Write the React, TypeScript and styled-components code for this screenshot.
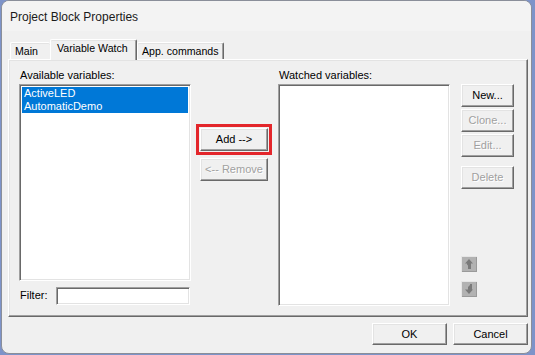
import React from "react";
import styled, { createGlobalStyle } from "styled-components";

const Global = createGlobalStyle`
  html, body {
    margin: 0;
    padding: 0;
    width: 535px;
    height: 355px;
    overflow: hidden;
    background: #7d93c9;
    font-family: "Liberation Sans", Arial, sans-serif;
    font-size: 11px;
    color: #000;
  }
  * { box-sizing: border-box; }
`;

const Desktop = styled.div`
  padding-left: 1px;
  width: 535px;
  height: 355px;
`;

const Window = styled.div`
  width: 531px;
  height: 354px;
  border: 1px solid #8a8e99;
  border-radius: 8px;
  overflow: hidden;
  background: #f0f0f0;
  display: flex;
  flex-direction: column;
`;

const TitleBar = styled.div`
  height: 30px;
  flex: none;
  background: #f3f3f3;
  display: flex;
  align-items: center;
  padding: 1px 0 0 8px;
  font-size: 12px;
  color: #1a1a1a;
`;

const Body = styled.div`
  padding: 8px 3px 0 6px;
  display: flex;
  flex-direction: column;
`;

const TabRow = styled.div`
  display: flex;
  align-items: flex-end;
  height: 20px;
  padding-left: 2px;
  position: relative;
  z-index: 1;
`;

const Tab = styled.div<{ $active?: boolean; $w: number; $noRight?: boolean }>`
  width: ${(p) => p.$w}px;
  height: ${(p) => (p.$active ? 21 : 17)}px;
  margin-bottom: ${(p) => (p.$active ? -1 : 0)}px;
  padding: ${(p) => (p.$active ? "2px 0 0 6px" : "2px 0 0 4px")};
  line-height: 13px;
  font-size: 10.6px;
  background: #f0f0f0;
  border-top: 1px solid #ffffff;
  border-left: 1px solid #ffffff;
  border-right: ${(p) => (p.$noRight ? "none" : "1px solid #696969")};
  border-radius: 2px 2px 0 0;
  box-shadow: ${(p) =>
    p.$noRight ? "inset 0 1px 0 #e3e3e3" : "inset -1px 0 0 #a0a0a0, inset 0 1px 0 #e3e3e3"};
  white-space: nowrap;
  overflow: hidden;
`;

const Panel = styled.div`
  width: 520px;
  height: 258px;
  border-top: 1px solid #ffffff;
  border-left: 1px solid #ffffff;
  border-right: 1px solid #696969;
  border-bottom: 1px solid #696969;
  box-shadow: inset -1px -1px 0 #a0a0a0, inset 1px 1px 0 #e3e3e3;
  padding: 9px 0 0 10px;
  display: grid;
  grid-template-columns: 172px 77px 172px 53px;
  column-gap: 5px;
  align-items: start;
`;

const Column = styled.div<{ $top?: number; $left?: number }>`
  display: flex;
  flex-direction: column;
  align-items: flex-start;
  padding-top: ${(p) => p.$top ?? 0}px;
  margin-left: ${(p) => p.$left ?? 0}px;
`;

const Label = styled.div`
  height: 13px;
  line-height: 13px;
  margin: 0 0 2px 1px;
  white-space: nowrap;
`;

const ListBox = styled.div<{ $h: number; $w: number }>`
  width: ${(p) => p.$w}px;
  height: ${(p) => p.$h}px;
  background: #fff;
  border: 1px solid;
  border-color: #a0a0a0 #ffffff #ffffff #a0a0a0;
  box-shadow: inset 1px 1px 0 #696969, inset -1px -1px 0 #e3e3e3;
  padding: 2px 2px;
`;

const Item = styled.div<{ $selected?: boolean }>`
  height: 13px;
  line-height: 13px;
  padding-left: 2px;
  background: ${(p) => (p.$selected ? "#0078d7" : "transparent")};
  color: ${(p) => (p.$selected ? "#fff" : "#000")};
  white-space: nowrap;
`;

const FilterRow = styled.div`
  width: 172px;
  margin-top: 6px;
  display: flex;
  align-items: center;
  justify-content: space-between;
  padding: 0 1px;
`;

const FilterLabel = styled.span`
  line-height: 13px;
  padding-bottom: 1px;
`;

const TextInput = styled.div`
  width: 134px;
  height: 18px;
  background: #fff;
  border: 1px solid;
  border-color: #a0a0a0 #ffffff #ffffff #a0a0a0;
  box-shadow: inset 1px 1px 0 #696969, inset -1px -1px 0 #e3e3e3;
`;

const Button = styled.button<{ $w?: number; $h?: number }>`
  width: ${(p) => p.$w ?? 53}px;
  height: ${(p) => p.$h ?? 23}px;
  padding: 0;
  margin: 0;
  font-family: inherit;
  font-size: 11px;
  color: #000;
  background: #f0f0f0;
  border: 1px solid;
  border-color: #ffffff #696969 #696969 #ffffff;
  box-shadow: inset -1px -1px 0 #a0a0a0, inset 1px 1px 0 #e3e3e3;
  display: flex;
  align-items: center;
  justify-content: center;
  line-height: 13px;
  &:disabled {
    color: #a0a0a0;
    text-shadow: 1px 1px 0 #ffffff;
  }
`;

const Highlight = styled.div`
  border: 3px solid #e3262b;
  padding: 1px;
  width: 76px;
`;

const RemoveWrap = styled.div`
  margin: 3px 0 0 4px;
`;

const ButtonStack = styled.div<{ $gap: number; $top?: number }>`
  display: flex;
  flex-direction: column;
  gap: ${(p) => p.$gap}px;
  margin-top: ${(p) => p.$top ?? 0}px;
`;

const Footer = styled.div`
  display: flex;
  justify-content: flex-end;
  gap: 6px;
  margin-top: 6px;
`;

const ArrowBox = styled.div<{ $top: number }>`
  width: 16px;
  height: 16px;
  margin-top: ${(p) => p.$top}px;
  display: block;
  svg { display: block; }
`;

const UpArrow = () => (
  <svg width="16" height="16" viewBox="0 0 16 16">
    <rect x="0" y="0" width="16" height="16" fill="#b2b2b2" />
    <path d="M0 0H16V1H1V16H0Z" fill="#e6e6e6" />
    <path d="M15 1H16V16H1V15H15Z" fill="#9a9a9a" />
    <path d="M8 3L12 7.5H10V13H7V9.5L6 8.5V7.5H4Z" fill="#7a7a7a" />
  </svg>
);

const DownArrow = () => (
  <svg width="16" height="16" viewBox="0 0 16 16">
    <rect x="0" y="0" width="16" height="16" fill="#b2b2b2" />
    <path d="M0 0H16V1H1V16H0Z" fill="#e6e6e6" />
    <path d="M15 1H16V16H1V15H15Z" fill="#9a9a9a" />
    <path d="M9 3H11V8.5H12L8 13L4 8.5H7V6L9 4Z" fill="#7a7a7a" />
  </svg>
);

export default function App() {
  return (
    <>
      <Global />
      <Desktop>
        <Window>
          <TitleBar>Project Block Properties</TitleBar>
          <Body>
            <TabRow>
              <Tab $w={40} $noRight>
                Main
              </Tab>
              <Tab $w={87} $active>
                Variable Watch
              </Tab>
              <Tab $w={87}>App. commands</Tab>
            </TabRow>
            <Panel>
              <Column>
                <Label>Available variables:</Label>
                <ListBox $w={172} $h={197}>
                  <Item $selected>ActiveLED</Item>
                  <Item $selected>AutomaticDemo</Item>
                </ListBox>
                <FilterRow>
                  <FilterLabel>Filter:</FilterLabel>
                  <TextInput />
                </FilterRow>
              </Column>
              <Column $top={55}>
                <Highlight>
                  <Button $w={68}>Add --&gt;</Button>
                </Highlight>
                <RemoveWrap>
                  <Button $w={68} disabled>
                    &lt;-- Remove
                  </Button>
                </RemoveWrap>
              </Column>
              <Column>
                <Label>Watched variables:</Label>
                <ListBox $w={172} $h={222} />
              </Column>
              <Column $top={15} $left={6}>
                <ButtonStack $gap={2}>
                  <Button>New...</Button>
                  <Button disabled>Clone...</Button>
                  <Button disabled>Edit...</Button>
                </ButtonStack>
                <ButtonStack $gap={0} $top={9}>
                  <Button disabled>Delete</Button>
                </ButtonStack>
                <ArrowBox $top={67}>
                  <UpArrow />
                </ArrowBox>
                <ArrowBox $top={9}>
                  <DownArrow />
                </ArrowBox>
              </Column>
            </Panel>
            <Footer>
              <Button $w={75} $h={22}>
                OK
              </Button>
              <Button $w={75} $h={22}>
                Cancel
              </Button>
            </Footer>
          </Body>
        </Window>
      </Desktop>
    </>
  );
}
